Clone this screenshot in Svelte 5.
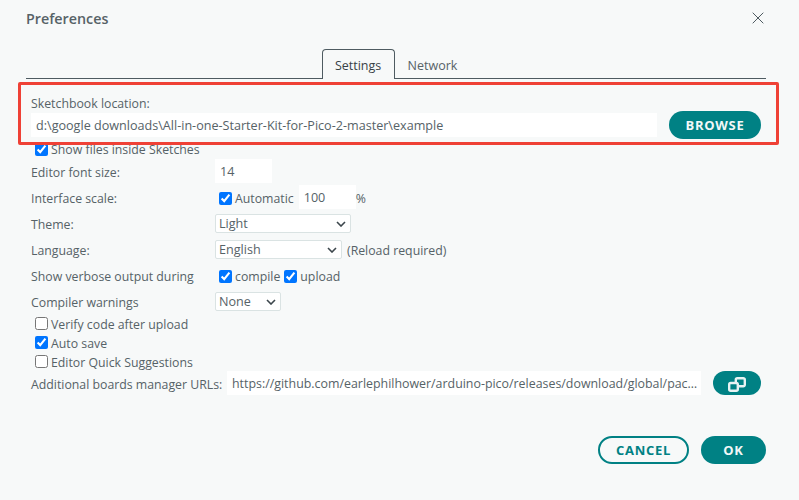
<script>
  const urlsValue = 'https://github.com/earlephilhower/arduino-pico/releases/download/global/package_rp2040_index.json';
</script>

<div class="dialog">
  <header class="title-bar">
    <h1>Preferences</h1>
    <button class="close" aria-label="Close">
      <svg width="12" height="12" viewBox="0 0 12 12"><path d="M.7.7l10.6 10.6M11.3.7L.7 11.3" stroke="#4e5b61" stroke-width="1" fill="none" /></svg>
    </button>
  </header>

  <nav class="tabs">
    <div class="tab active">Settings</div>
    <div class="tab">Network</div>
  </nav>

  <div class="content">
    <div class="highlight"></div>

    <div class="location">
      <label for="sketchbook">Sketchbook location:</label>
      <div class="location-row">
        <input id="sketchbook" class="text path" value="d:\google downloads\All-in-one-Starter-Kit-for-Pico-2-master\example" />
        <button class="btn primary browse">BROWSE</button>
      </div>
    </div>

    <label class="check top"><input type="checkbox" checked />Show files inside Sketches</label>

    <div class="row">
      <span class="name">Editor font size:</span>
      <input class="text small" value="14" />
    </div>
    <div class="row">
      <span class="name">Interface scale:</span>
      <label class="check inner"><input type="checkbox" checked />Automatic</label>
      <input class="text small scale" value="100" />
      <span class="unit">%</span>
    </div>
    <div class="row">
      <span class="name">Theme:</span>
      <div class="select w136">
        <select><option>Light</option></select>
        <svg width="10" height="6" viewBox="0 0 10 6"><path d="M1 1l4 4 4-4" stroke="#3c464c" stroke-width="1.6" fill="none" /></svg>
      </div>
    </div>
    <div class="row">
      <span class="name">Language:</span>
      <div class="select w127">
        <select><option>English</option></select>
        <svg width="10" height="6" viewBox="0 0 10 6"><path d="M1 1l4 4 4-4" stroke="#3c464c" stroke-width="1.6" fill="none" /></svg>
      </div>
      <span class="note">(Reload required)</span>
    </div>
    <div class="row">
      <span class="name">Show verbose output during</span>
      <label class="check inner"><input type="checkbox" checked />compile</label>
      <label class="check inner"><input type="checkbox" checked />upload</label>
    </div>
    <div class="row">
      <span class="name">Compiler warnings</span>
      <div class="select w66">
        <select><option>None</option></select>
        <svg width="10" height="6" viewBox="0 0 10 6"><path d="M1 1l4 4 4-4" stroke="#3c464c" stroke-width="1.6" fill="none" /></svg>
      </div>
    </div>

    <div class="checks">
      <label class="check"><input type="checkbox" />Verify code after upload</label>
      <label class="check"><input type="checkbox" checked />Auto save</label>
      <label class="check"><input type="checkbox" />Editor Quick Suggestions</label>
    </div>

    <div class="urls">
      <span>Additional boards manager URLs:</span>
      <input class="text url" value={urlsValue} />
      <button class="btn primary open" aria-label="Edit URLs">
        <svg width="18" height="15" viewBox="0 0 18 15" fill="none" stroke="#e8f3f3" stroke-width="2.4"><rect x="1.200" y="6" width="8.600" height="7.800" rx="1.500" /><path d="M7.800 5V2.700A1.500 1.500 0 0 1 9.300 1.200H15.300A1.500 1.500 0 0 1 16.800 2.700V7.800A1.500 1.500 0 0 1 15.300 9.300H10" /></svg>
      </button>
    </div>
  </div>

  <footer>
    <button class="btn secondary">CANCEL</button>
    <button class="btn primary ok">OK</button>
  </footer>
</div>

<style>
  :global(body) {
    margin: 0;
    background: #f7f9f9;
  }

  .dialog {
    width: 799px;
    height: 500px;
    box-sizing: border-box;
    padding: 0 33px 0 26px;
    font-family: "Open Sans", sans-serif;
    font-size: 12.3px;
    color: #566267;
    background: #f7f9f9;
    overflow: hidden;
  }

  .title-bar {
    display: flex;
    justify-content: space-between;
    align-items: center;
    height: 36px;
  }

  h1 {
    margin: 0;
    font-size: 14.3px;
    font-weight: 600;
    color: #566267;
  }

  .close {
    border: 0;
    padding: 0;
    margin-right: 2px;
    background: none;
    display: flex;
  }

  .tabs {
    display: flex;
    justify-content: center;
    height: 29px;
    margin-top: 13px;
    border-bottom: 1px solid #4e5b61;
    box-sizing: content-box;
  }

  .tab {
    box-sizing: border-box;
    height: 30px;
    padding: 0 12px;
    line-height: 32px;
    font-size: 12.5px;
    border: 1px solid transparent;
    border-bottom: 0;
  }

  .tab.active {
    width: 73px;
    padding: 0;
    text-align: center;
    color: #374146;
    border-color: #4e5b61;
    border-radius: 4px 4px 0 0;
    background: #f7f9f9;
  }

  .content {
    position: relative;
    padding-left: 5px;
  }

  /* red annotation box from the screenshot, sits over the location row */
  .highlight {
    position: absolute;
    left: -8px;
    top: 3px;
    width: 755px;
    height: 57px;
    border: 3px solid #ef4136;
    border-radius: 2px;
    pointer-events: none;
    z-index: 1;
  }

  .location {
    padding-top: 17px;
  }

  .location label {
    display: block;
    line-height: 16px;
    margin-bottom: -1px;
  }

  .location-row {
    display: flex;
    align-items: center;
    gap: 12px;
    height: 28px;
    width: 730px;
  }

  .text {
    box-sizing: border-box;
    height: 24px;
    border: 0;
    outline: 0;
    padding: 0 5px;
    background: #fff;
    font: inherit;
    font-size: 12.6px;
    color: #566267;
  }

  .path {
    width: 626px;
  }

  .btn {
    border: 0;
    border-radius: 14px;
    font-family: inherit;
    font-size: 13px;
    font-weight: 700;
    letter-spacing: 0.7px;
    padding: 0;
  }

  .primary {
    background: #008184;
    color: #f2f8f8;
  }

  .browse {
    width: 92px;
    height: 28px;
  }

  .check {
    display: flex;
    align-items: center;
    line-height: 19px;
  }

  .check input {
    width: 13px;
    height: 13px;
    margin: 0 3px 0 0;
    accent-color: #0075ff;
  }

  .top {
    margin: 1px 0 -1px 4px;
    height: 19px;
  }

  .row {
    display: flex;
    align-items: center;
    height: 26px;
  }

  .name {
    width: 184px;
    flex: none;
    padding-top: 3px;
  }

  .small {
    width: 57px;
  }

  .inner {
    margin: 2px 0 0 4px;
  }

  .scale {
    margin-left: 5px;
  }

  .unit,
  .note {
    padding-top: 2px;
  }

  .select {
    position: relative;
    display: flex;
    align-items: center;
  }

  .select select {
    appearance: none;
    width: 100%;
    height: 19px;
    box-sizing: border-box;
    border: 1px solid #dae3e3;
    border-radius: 2px;
    background: #fff;
    padding: 0 3px;
    font: inherit;
    font-size: 12.6px;
    color: #566267;
  }

  .select svg {
    position: absolute;
    right: 5px;
    top: 7px;
    pointer-events: none;
  }

  .w136 { width: 136px; }
  .w127 { width: 127px; }
  .w66 { width: 66px; }

  .note {
    margin-left: 5px;
  }

  .checks {
    margin: 1px 0 -1px;
    padding-left: 4px;
  }

  .checks input {
    margin-top: -2px;
  }

  .urls {
    display: flex;
    align-items: center;
    height: 24px;
    width: 730px;
  }

  .urls span {
    white-space: nowrap;
    flex: none;
    width: 196px;
    padding-top: 2px;
  }

  .url {
    width: 474px;
    padding-right: 3px;
    font-size: 12.4px;
    text-overflow: ellipsis;
  }

  .open {
    width: 48px;
    height: 24px;
    margin-left: 12px;
    padding-top: 2px;
    display: flex;
    align-items: center;
    justify-content: center;
  }

  footer {
    display: flex;
    justify-content: flex-end;
    gap: 12px;
    margin-top: 41px;
  }

  .secondary {
    box-sizing: border-box;
    width: 91px;
    height: 28px;
    background: transparent;
    border: 2px solid #008184;
    color: #008184;
  }

  .ok {
    width: 65px;
    height: 28px;
  }
</style>
